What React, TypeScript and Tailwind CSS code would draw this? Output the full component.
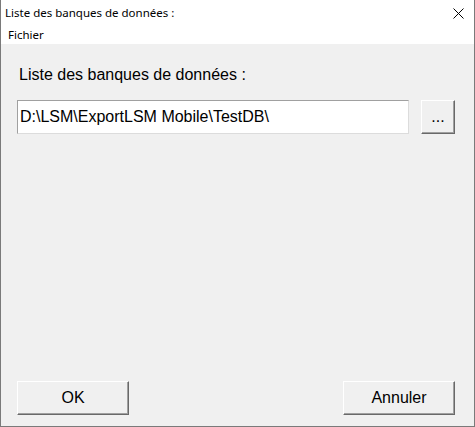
import React from "react";

function ClassicButton({ children, className = "" }: { children: React.ReactNode; className?: string }) {
  return (
    <button
      className={`h-[34px] bg-[#f0f0f0] border border-t-white border-l-white border-r-[#696969] border-b-[#696969] shadow-[inset_-1px_-1px_0_#a0a0a0] text-[16px] text-black ${className}`}
      style={{ fontFamily: '"Liberation Sans", Arial, sans-serif' }}
    >
      {children}
    </button>
  );
}

export default function App() {
  return (
    <div className="w-[475px] h-[427px] flex flex-col bg-white border-x border-b border-[#7a7a7a] overflow-hidden">
      <div
        className="h-[25px] flex items-center justify-between pl-[4px] pr-[10px] text-[11.5px] text-black"
        style={{ fontFamily: '"Noto Sans", "Open Sans", sans-serif' }}
      >
        <span>Liste des banques de données :</span>
        <svg width="11" height="11" viewBox="0 0 11 11" className="mt-[1px]">
          <path d="M0.5 0.5 L10.5 10.5 M10.5 0.5 L0.5 10.5" stroke="#000" strokeWidth="1" />
        </svg>
      </div>
      <div
        className="h-[19px] flex items-center pl-[7px] text-[11.5px] text-black"
        style={{ fontFamily: '"Noto Sans", "Open Sans", sans-serif' }}
      >
        Fichier
      </div>
      <div
        className="flex-1 bg-[#f0f0f0] flex flex-col pl-[16px] pr-[19px] pt-[22px] pb-[11px]"
        style={{ fontFamily: '"Liberation Sans", Arial, sans-serif' }}
      >
        <div className="ml-[2px] text-[16px] leading-[18px] text-black">Liste des banques de données :</div>
        <div className="mt-[16px] flex gap-[12px]">
          <div className="flex-1 h-[34px] bg-white border border-t-[#a0a0a0] border-l-[#a0a0a0] border-r-[#dcdcdc] border-b-[#dcdcdc] flex items-center pl-[2px] text-[16px] text-black">
            D:\LSM\ExportLSM Mobile\TestDB\
          </div>
          <ClassicButton className="w-[34px] flex items-end justify-center pb-[8px] text-[13px] leading-none">...</ClassicButton>
        </div>
        <div className="mt-auto flex justify-between">
          <ClassicButton className="w-[112px]">OK</ClassicButton>
          <ClassicButton className="w-[112px]">Annuler</ClassicButton>
        </div>
      </div>
    </div>
  );
}
